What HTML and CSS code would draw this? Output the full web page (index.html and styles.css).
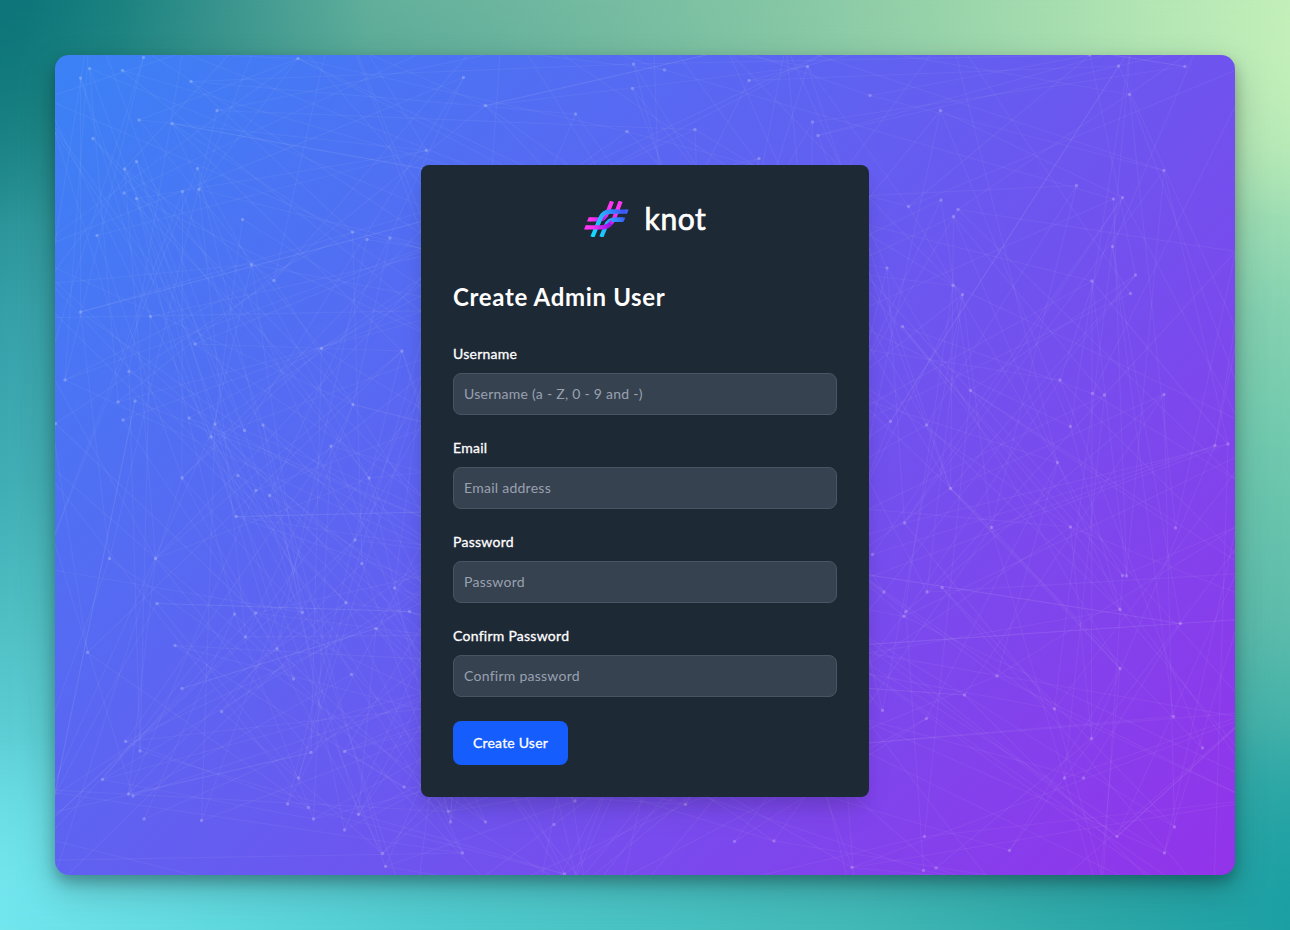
FILE: index.html
```html
<!DOCTYPE html>
<html lang="en">
<head>
<meta charset="utf-8">
<title>knot</title>
<link rel="stylesheet" href="styles.css">
</head>
<body>
<div class="stage">
  <div class="backdrop backdrop-left"></div>
  <div class="backdrop backdrop-top"></div>
  <div class="backdrop backdrop-bottom"></div>
  <main class="window">
    <svg class="network" viewBox="55 55 1180 820" aria-hidden="true"></svg>
    <section class="card">
      <div class="brand">
        <svg class="brand-mark" viewBox="42 32 135 109" aria-hidden="true">
          <defs>
            <linearGradient id="pink" gradientUnits="userSpaceOnUse" x1="140" y1="34" x2="100" y2="108">
              <stop offset="0.35" stop-color="#ff35f2"/><stop offset="1" stop-color="#a414e8"/>
            </linearGradient>
            <linearGradient id="pinkLeft" gradientUnits="userSpaceOnUse" x1="46" y1="0" x2="125" y2="0">
              <stop offset="0.2" stop-color="#ff35f2"/><stop offset="1" stop-color="#8d12e8"/>
            </linearGradient>
            <linearGradient id="blue" gradientUnits="userSpaceOnUse" x1="70" y1="135" x2="165" y2="70">
              <stop offset="0" stop-color="#12dcff"/><stop offset="0.55" stop-color="#28a8ff"/><stop offset="1" stop-color="#3b55fa"/>
            </linearGradient>
          </defs>
          <g fill="none" stroke-width="12.5">
            <path stroke="url(#blue)" d="M67 140L90 86Q99 64 120 64H169"/>
            <path stroke="url(#blue)" d="M94 140L108 106Q116 88 133 88H159"/>
            <path stroke="url(#pink)" d="M126 33L112 68Q104 87 86 87"/>
            <path stroke="url(#pink)" d="M152 33L134 80Q122 111 96 111"/>
            <path stroke="url(#pinkLeft)" d="M60 87H87Q98 87 104 81M49 111H97Q112 111 122 100"/>
            <path stroke="url(#blue)" d="M84 101L90 86Q99 64 120 64H148M124 90Q128 88 133 88H159"/>
          </g>
          <path fill="#3b62fb" d="M166 57.750H176L171 70.250H166zM156 81.750H166L161 94.250H156z"/>
          <path fill="#ff35f2" d="M56 80.750H62V93.250H51zM47 104.750H53V117.250H42z"/>
        </svg>
        <span class="brand-name">knot</span>
      </div>
      <h1 class="title">Create Admin User</h1>
      <form class="form">
        <div class="field">
          <label class="label" for="username">Username</label>
          <input class="input" id="username" type="text" placeholder="Username (a - Z, 0 - 9 and -)">
        </div>
        <div class="field">
          <label class="label" for="email">Email</label>
          <input class="input" id="email" type="email" placeholder="Email address">
        </div>
        <div class="field">
          <label class="label" for="password">Password</label>
          <input class="input" id="password" type="password" placeholder="Password">
        </div>
        <div class="field">
          <label class="label" for="confirm">Confirm Password</label>
          <input class="input" id="confirm" type="password" placeholder="Confirm password">
        </div>
        <button class="submit" type="button">Create User</button>
      </form>
    </section>
  </main>
</div>
<script src="network.js"></script>
</body>
</html>
```

FILE: styles.css
```css
* { box-sizing: border-box; }

body {
  margin: 0;
  font-family: Lato, "Open Sans", sans-serif;
  color: #fff;
}

.stage {
  position: relative;
  width: 1290px;
  height: 930px;
  padding: 55px;
  overflow: hidden;
  background: linear-gradient(180deg, #c8f2bb 0, #b0e6b5 150px, #86d2b1 310px, #70c9ae 450px, #5dbcab 620px, #38aca8 770px, #1c9fa3 930px);
}

.backdrop { position: absolute; inset: 0; }

.backdrop-left {
  background: linear-gradient(180deg, #0e767a 0, #1b8585 100px, #359fa8 310px, #40adb4 480px, #4fbfc4 620px, #72e5ed 920px);
  -webkit-mask-image: linear-gradient(90deg, #000, transparent);
  mask-image: linear-gradient(90deg, #000, transparent);
}

.backdrop-top {
  background: linear-gradient(100deg, #0e767a 30px, #1c8280 120px, #3f9890 240px, #62b09b 370px, #6db59f 500px, #82c4a4 740px, #99d4aa 940px, #b2e5b3 1130px, #c8f2bb 1320px);
  -webkit-mask-image: linear-gradient(180deg, #000 0, transparent 220px);
  mask-image: linear-gradient(180deg, #000 0, transparent 220px);
}

.backdrop-bottom {
  background: linear-gradient(90deg, #72e5ed 0, #60d8dd 215px, #50cace 430px, #42b8b6 860px, #2fa9a9 1075px, #1c9fa3 1290px);
  -webkit-mask-image: linear-gradient(0deg, #000 0, transparent 200px);
  mask-image: linear-gradient(0deg, #000 0, transparent 200px);
}

.window {
  position: relative;
  display: flex;
  justify-content: center;
  width: 1180px;
  height: 820px;
  padding-top: 110px;
  border-radius: 14px;
  overflow: hidden;
  background: linear-gradient(135deg, #3b82f6, #9333ea);
}

.stage::after {
  content: "";
  position: absolute;
  inset: 55px;
  border-radius: 14px;
  box-shadow: 0 7px 14px rgba(0, 0, 0, 0.25), 0 14px 36px rgba(0, 0, 0, 0.2);
  pointer-events: none;
}

.network {
  position: absolute;
  inset: 0;
  width: 1180px;
  height: 820px;
}

.network-line { stroke: #fff; stroke-opacity: 0.05; stroke-width: 1.2; }
.network-dot { fill: #fff; fill-opacity: 0.22; }

.card {
  position: relative;
  width: 448px;
  height: 632px;
  padding: 32px;
  border-radius: 8px;
  background: #1e2936;
  box-shadow: 0 10px 15px -3px rgba(0, 0, 0, 0.1), 0 20px 30px -8px rgba(0, 0, 0, 0.1);
}

.brand {
  display: flex;
  align-items: center;
  justify-content: center;
  gap: 16px;
  height: 44px;
}

.brand-mark { width: 45px; height: 36.300px; }

.brand-name {
  font-size: 30px;
  line-height: 44px;
  padding-bottom: 2px;
  letter-spacing: 0.600px;
  -webkit-text-stroke: 0.700px #fff;
}

.title {
  margin: 40px 0 0;
  font-size: 24px;
  line-height: 32px;
  font-weight: 700;
  letter-spacing: 0.660px;
}

.form { display: flex; flex-direction: column; gap: 24px; margin-top: 31px; }

.field { display: flex; flex-direction: column; gap: 9px; }

.field + .field { margin-top: -1px; }

.label {
  font-size: 14px;
  line-height: 20px;
  -webkit-text-stroke: 0.300px #fff;
  letter-spacing: 0.260px;
}

.input {
  width: 100%;
  height: 42px;
  padding: 0 10px 2px;
  border: 1px solid #4a5563;
  border-radius: 8px;
  background: #374251;
  color: #fff;
  font-family: inherit;
  font-size: 14px;
  line-height: 20px;
  letter-spacing: 0.260px;
}

.input::placeholder { color: #99a1af; opacity: 1; }

.submit {
  align-self: flex-start;
  width: 115px;
  height: 44px;
  padding: 0 0 1px;
  border: 0;
  border-radius: 8px;
  background: #155dfc;
  color: #fff;
  font-family: inherit;
  font-size: 14px;
  line-height: 20px;
  letter-spacing: 0.200px;
  -webkit-text-stroke: 0.300px #fff;
}
```

FILE: network.js
```js
// Points of the network, as x,y pairs.
const points = `80.5,78 89.5,68.5 122.5,70.5 143.5,57.5 191,81.5 298,58.5 217,110.5 139,120 172,123.5 93,138.5
136.5,161.5 124.5,169 124,193 136.5,198.5 197.5,168.5 182.5,191.5 199,189.5 97,235.5 242.5,219.5 251.5,264.5
274,280.5 352.5,232 367,239.5 390,238 426.5,150.5 870,95.5 940.5,110.5 1090,55 1118.5,66 1129.5,94.5 1185,66.5
1076.5,185.5 1164,170.5 1113.5,199 1122.5,197.5 908.5,206.5 941,200 958,209.5 953.5,216.5 887,268 953,285.5
962.5,294.5 1112.5,246.5 1092,281 1135.5,275 1130.5,293.5 87.5,652.5 175,645.5 182,688.5 221.5,711.5 245.5,637
277,649 293.5,679 351.5,674.5 376,628.5 125.5,741.5 140,751 102.5,779.5 128.5,794 133,796 144,819 201.5,820.5
298.5,778 311,752.5 344.5,751.5 404,787 287.5,804 308.5,807.5 313.5,819 358.5,814.5 344.5,830 382.5,853.5
385.5,866.5 1180.5,623.5 1120,668.5 997,676 964.5,695 882.5,710.5 926.5,718.5 1054.5,709 1173.5,716.5
1091.5,738.5 1202.5,748 1064.5,778 1083.5,778 1117,836.5 1174.5,827 1164.5,853 1009.5,850.5 924.5,836.5
936,868 923.5,870.5 80.5,312 150.5,316.5 195,344 321.5,348.5 402,351 129,371.5 65,380 118,402 135,401 123,420
55.5,423.5 189,418 215,424 211,437 244.5,430.5 263,425 353,404.5 331,446 369,478 182,478 238,475.5 256,490.5
269.5,495.5 236,516.5 109.5,558.5 155.5,558.5 157,603.5 355,540 362,563.5 346,602.5 394.5,588 409.5,611.5
234.5,614 255.5,613 302.5,612.5 902.5,326.5 970.5,390.5 1060,380 1092.5,393.5 1104.5,395 1164,394.5
890.5,421.5 926.5,425 1070.5,426.5 1215,445.5 1228,444 1057.5,462.5 950.5,488.5 904.5,523 991.5,527.5
1070.5,527 1175.5,528 872.5,554.5 1122.5,575.5 1126.5,576 884,592 927,592 942,587.5 906,611.5 904,616.5
1120,609.5 463.5,77.5 485.5,105.5 575.5,114 633.5,64 664.5,70 632.5,88.5 627,131.5 695,129.5 749,80.5
807.5,66.5 812.5,122 818,135.5 759,158.5 448.5,811.5 450.5,822 485.5,822 554,824.5 575,801 685.5,804.5
734.5,841.5 774,841 462.5,853 564.5,874 852,867.5`.split(/\s+/).map(p => p.split(",").map(Number));

const svg = document.querySelector(".network");
const NS = "http://www.w3.org/2000/svg";

// Small seeded generator, so that the pattern is the same on every load.
let seed = 4711;
function random() {
  seed = (seed * 1664525 + 1013904223) >>> 0;
  return seed / 4294967296;
}

function add(name, attrs) {
  const el = document.createElementNS(NS, name);
  for (const key in attrs) el.setAttribute(key, attrs[key]);
  svg.appendChild(el);
}

function line(a, b) {
  add("line", { class: "network-line", x1: a[0], y1: a[1], x2: b[0], y2: b[1] });
}

// Points behind the card and just outside the window only carry lines.
const hidden = [];
for (let i = 0; i < 70; i++) hidden.push([430 + random() * 430, 175 + random() * 610]);
for (let i = 0; i < 14; i++) {
  hidden.push([random() * 1290, 55 - random() * 60], [random() * 1290, 875 + random() * 60]);
  hidden.push([55 - random() * 60, random() * 930], [1235 + random() * 60, random() * 930]);
}
const all = points.concat(hidden);

for (const a of all) {
  let count = 0;
  for (let tries = 0; tries < 60 && count < 2; tries++) {
    const b = all[Math.floor(random() * all.length)];
    const d = Math.hypot(a[0] - b[0], a[1] - b[1]);
    if (d > 170 && d < 480) { line(a, b); count++; }
  }
}
line([80.5, 78], [80.5, 312]);
line([298, 58.5], [199, 189.5]);

for (const p of points) add("circle", { class: "network-dot", cx: p[0], cy: p[1], r: 1.7 });
```
